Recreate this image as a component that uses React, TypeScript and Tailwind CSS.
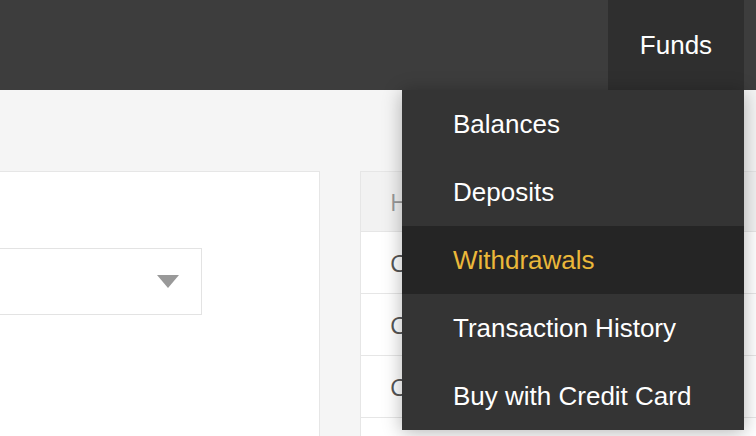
const menu = ["Balances", "Deposits", "Withdrawals", "Transaction History", "Buy with Credit Card"];

export default function App() {
  return (
    <div className="relative w-full h-[436px] overflow-hidden bg-[#f5f5f5]">
      <header className="relative z-10 h-[90px] bg-[#3d3d3d] flex justify-end pr-[12px]">
        <div className="relative w-[136px] h-full bg-[#2f2f2f] flex items-center justify-center text-white text-[26px] font-['Liberation_Sans',Arial,sans-serif]">
          Funds
          <ul className="absolute top-full right-0 w-[342px] bg-[#343434] shadow-[0_2px_18px_rgba(0,0,0,0.3)]">
            {menu.map((m) => (
              <li
                key={m}
                className={`h-[68px] flex items-center pl-[51px] text-[26px] ${
                  m === "Withdrawals" ? "bg-[#252525] text-[#ebb83a]" : "text-white"
                }`}
              >
                {m}
              </li>
            ))}
          </ul>
        </div>
      </header>

      <div className="flex gap-[40px] pt-[81px] font-['Open_Sans',sans-serif]">
        <div className="-ml-[100px] w-[420px] h-[300px] shrink-0 bg-white border border-[#e6e6e6] pl-[40px] pr-[117px] pt-[76px]">
          <div className="h-[67px] border border-[#e3e3e3] flex items-center justify-end pr-[22px]">
            <svg width="22" height="13" viewBox="0 0 22 13">
              <path d="M0 0h22L11 13z" fill="#999" />
            </svg>
          </div>
        </div>

        <div className="w-[500px] h-[300px] shrink-0 bg-white border border-[#e6e6e6] text-[24px]">
          <div className="h-[60px] bg-[#f2f2f2] flex items-center pl-[29px] text-[#9a9a9a] border-b border-[#e6e6e6]">
            Hash
          </div>
          {["Completed", "Completed", "Completed"].map((r, i) => (
            <div key={i} className="h-[62px] flex items-center pl-[29px] text-[#555] border-b border-[#e6e6e6]">
              {r}
            </div>
          ))}
        </div>
      </div>
    </div>
  );
}
